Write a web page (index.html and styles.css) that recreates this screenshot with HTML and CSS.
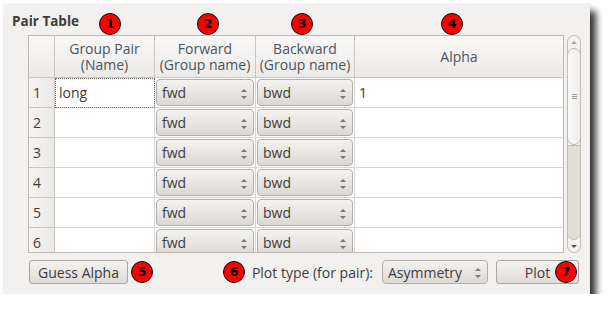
FILE: index.html
```html
<!DOCTYPE html>
<html lang="en">
<head>
    <meta charset="UTF-8">
    <title>Pair Table</title>
    <link rel="stylesheet" href="styles.css">
</head>
<body>
    <div class="window">
        <div class="title">Pair Table</div>
        <div class="table-area">
            <div class="grid">
                <div class="hd corner"></div>
                <div class="hd"><span>Group Pair</span><span>(Name)</span></div>
                <div class="hd"><span>Forward</span><span>(Group name)</span></div>
                <div class="hd"><span>Backward</span><span>(Group name)</span></div>
                <div class="hd">Alpha</div>

                <div class="rh">1</div>
                <div class="cell focus">long</div>
                <div class="cell"><div class="combo">fwd</div></div>
                <div class="cell"><div class="combo">bwd</div></div>
                <div class="cell">1</div>

                <div class="rh">2</div>
                <div class="cell"></div>
                <div class="cell"><div class="combo">fwd</div></div>
                <div class="cell"><div class="combo">bwd</div></div>
                <div class="cell"></div>

                <div class="rh">3</div>
                <div class="cell"></div>
                <div class="cell"><div class="combo">fwd</div></div>
                <div class="cell"><div class="combo">bwd</div></div>
                <div class="cell"></div>

                <div class="rh">4</div>
                <div class="cell"></div>
                <div class="cell"><div class="combo">fwd</div></div>
                <div class="cell"><div class="combo">bwd</div></div>
                <div class="cell"></div>

                <div class="rh">5</div>
                <div class="cell"></div>
                <div class="cell"><div class="combo">fwd</div></div>
                <div class="cell"><div class="combo">bwd</div></div>
                <div class="cell"></div>

                <div class="rh">6</div>
                <div class="cell"></div>
                <div class="cell"><div class="combo">fwd</div></div>
                <div class="cell"><div class="combo">bwd</div></div>
                <div class="cell"></div>
            </div>
            <div class="scrollbar">
                <div class="sb-up"></div>
                <div class="sb-thumb"><span class="grip"></span></div>
                <div class="sb-track"></div>
                <div class="sb-down"></div>
            </div>
        </div>
        <div class="controls">
            <button class="btn guess">Guess Alpha</button>
            <span class="spacer"></span>
            <span class="label">Plot type (for pair):</span>
            <div class="combo plot-type">Asymmetry</div>
            <button class="btn plot">Plot</button>
        </div>

        <!-- numbered annotations -->
        <span class="badge b1">1</span>
        <span class="badge b2">2</span>
        <span class="badge b3">3</span>
        <span class="badge b4">4</span>
        <span class="badge b5">5</span>
        <span class="badge b6">6</span>
        <span class="badge b7">7</span>
    </div>
</body>
</html>
```
FILE: styles.css
```css
body {
    margin: 0;
    background: #ffffff;
    font-family: "Open Sans", "Noto Sans", sans-serif;
    font-size: 14px;
    color: #3c3c3c;
}
.window {
    position: relative;
    margin: 4px 0 0 4px;
    width: 586px;
    height: 290px;
    background: #f2f1f0;
    box-shadow: 0 0 1px rgba(0, 0, 0, 0.2), 6px 7px 7px rgba(0, 0, 0, 0.8);
}
.title {
    padding: 9px 0 0 8px;
    height: 16px;
    line-height: 16px;
    font-size: 13.5px;
    font-weight: bold;
    color: #3c3c3c;
}
.table-area {
    display: flex;
    margin: 6px 0 0 24px;
}
.grid {
    box-sizing: border-box;
    width: 536px;
    height: 218px;
    border: 1px solid #bdb7b0;
    background: #ffffff;
    overflow: hidden;
    display: grid;
    grid-template-columns: 26px 100px 101px 99px 208px;
    grid-template-rows: 42px repeat(6, 30px);
}
.hd {
    box-sizing: border-box;
    border-right: 1px solid #cbc6c0;
    border-bottom: 1px solid #cbc6c0;
    background: linear-gradient(#faf9f8, #eceae7);
    color: #4b5560;
    text-align: center;
    line-height: 16px;
    display: flex;
    flex-direction: column;
    align-items: center;
    justify-content: center;
    padding-top: 1px;
}
.hd span {
    display: block;
    height: 16px;
}
.hd:nth-child(5) {
    border-right: none;
}
.rh {
    box-sizing: border-box;
    border-right: 1px solid #cbc6c0;
    border-bottom: 1px solid #cbc6c0;
    background: linear-gradient(90deg, #f6f5f4, #ebe9e6);
    padding-left: 4px;
    display: flex;
    align-items: center;
}
.cell {
    box-sizing: border-box;
    border-right: 1px solid #d6d6d6;
    border-bottom: 1px solid #d6d6d6;
    padding-left: 4px;
    display: flex;
    align-items: center;
}
.cell:nth-child(5n) {
    border-right: none;
}
.cell.focus {
    outline: 1px dotted #6a6a6a;
    outline-offset: -1px;
}
.cell .combo {
    flex: 1;
    margin: 0 1px 0 -3px;
}
.combo {
    position: relative;
    box-sizing: border-box;
    height: 27px;
    padding-left: 5px;
    border: 1px solid #b3aea8;
    border-radius: 4px;
    background: linear-gradient(#f4f3f1, #dcd8d4);
    display: flex;
    align-items: center;
    color: #3c3c3c;
}
.combo::before,
.combo::after {
    content: "";
    position: absolute;
    right: 6px;
    border-left: 3px solid transparent;
    border-right: 3px solid transparent;
}
.combo::before {
    top: 9px;
    border-bottom: 3px solid #7a7673;
}
.combo::after {
    top: 16px;
    border-top: 3px solid #7a7673;
}
.scrollbar {
    box-sizing: border-box;
    margin-left: 3px;
    width: 14px;
    height: 218px;
    border: 1px solid #c2bcb5;
    border-radius: 7px;
    background: #f4f3f2;
    display: flex;
    flex-direction: column;
    overflow: hidden;
}
.sb-up,
.sb-down {
    height: 12px;
    display: flex;
    justify-content: center;
    align-items: center;
}
.sb-up::before {
    content: "";
    border-left: 3px solid transparent;
    border-right: 3px solid transparent;
    border-bottom: 3px solid #a7a39f;
}
.sb-down::before {
    content: "";
    border-left: 3px solid transparent;
    border-right: 3px solid transparent;
    border-top: 3px solid #55524f;
}
.sb-thumb {
    box-sizing: border-box;
    height: 97px;
    margin: 0 -1px;
    border: 1px solid #bdb6ae;
    border-radius: 7px;
    background: linear-gradient(90deg, #fbfaf9, #f0eeec);
    display: flex;
    justify-content: center;
    align-items: center;
}
.grip {
    width: 5px;
    height: 5px;
    background: repeating-linear-gradient(#9c9894 0 1px, transparent 1px 2px);
}
.sb-track {
    flex: 1;
    margin: 0 -1px;
    border: 1px solid #c2bcb5;
    border-radius: 0 0 7px 7px;
    background: #e1ddd9;
}
.controls {
    display: flex;
    align-items: center;
    margin: 7px 11px 0 25px;
    height: 24px;
}
.btn {
    box-sizing: border-box;
    height: 24px;
    border: 1px solid #aba59f;
    border-radius: 3px;
    background: linear-gradient(#f5f4f2, #dedad6);
    font-family: inherit;
    font-size: 14px;
    color: #3c3c3c;
    padding: 0;
}
.guess {
    width: 99px;
}
.spacer {
    flex: 1;
}
.label {
    margin-right: 9px;
    color: #3c3c3c;
}
.plot-type {
    width: 106px;
    height: 24px;
}
.plot-type::before {
    top: 7px;
}
.plot-type::after {
    top: 14px;
}
.plot {
    width: 83px;
    margin-left: 8px;
}
.badge {
    position: absolute;
    box-sizing: border-box;
    width: 22px;
    height: 22px;
    border: 1.5px solid #000;
    border-radius: 50%;
    background: #ff0000;
    color: #000;
    font-family: "DejaVu Sans", sans-serif;
    font-weight: bold;
    font-size: 13px;
    line-height: 19px;
    text-align: center;
}
.b1 { left: 95px; top: 9px; }
.b2 { left: 193px; top: 9px; }
.b3 { left: 287px; top: 9px; }
.b4 { left: 437px; top: 9px; }
.b5 { left: 127px; top: 257px; }
.b6 { left: 219px; top: 257px; }
.b7 { left: 551px; top: 257px; }
```
